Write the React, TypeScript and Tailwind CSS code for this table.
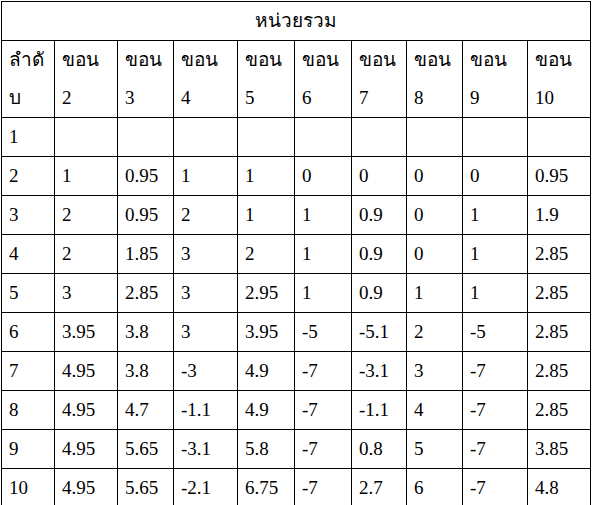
const widths = [53, 63, 56, 64, 57, 57, 55, 56, 65, 63];

const rows: string[][] = [
  ["1", "", "", "", "", "", "", "", "", ""],
  ["2", "1", "0.95", "1", "1", "0", "0", "0", "0", "0.95"],
  ["3", "2", "0.95", "2", "1", "1", "0.9", "0", "1", "1.9"],
  ["4", "2", "1.85", "3", "2", "1", "0.9", "0", "1", "2.85"],
  ["5", "3", "2.85", "3", "2.95", "1", "0.9", "1", "1", "2.85"],
  ["6", "3.95", "3.8", "3", "3.95", "-5", "-5.1", "2", "-5", "2.85"],
  ["7", "4.95", "3.8", "-3", "4.9", "-7", "-3.1", "3", "-7", "2.85"],
  ["8", "4.95", "4.7", "-1.1", "4.9", "-7", "-1.1", "4", "-7", "2.85"],
  ["9", "4.95", "5.65", "-3.1", "5.8", "-7", "0.8", "5", "-7", "3.85"],
  ["10", "4.95", "5.65", "-2.1", "6.75", "-7", "2.7", "6", "-7", "4.8"],
];

const rowHeights = [39, 38, 39, 38, 39, 39, 39, 38, 39, 39];

const cell =
  "border border-black px-[7px] py-0 align-middle [font-family:'Liberation_Serif','Times_New_Roman',Tinos,'Noto_Sans'] text-[19px] leading-[38px]";

export default function App() {
  return (
    <div className="w-[598px] h-[505px] overflow-hidden bg-white pl-[1px] pt-[1px] text-black">
      <table className="table-fixed border-collapse text-[19px] leading-[38px] text-black">
        <colgroup>
          {widths.map((w, i) => (
            <col key={i} style={{ width: w }} />
          ))}
        </colgroup>
        <tbody>
          <tr className="h-[38px]">
            <td colSpan={10} className={cell + " text-center"}>
              หน่วยรวม
            </td>
          </tr>
          <tr className="h-[77px]">
            <td className={cell}>
              ลำดั
              <br />บ
            </td>
            {[2, 3, 4, 5, 6, 7, 8, 9, 10].map((n) => (
              <td key={n} className={cell}>
                ขอน
                <br />
                {n}
              </td>
            ))}
          </tr>
          {rows.map((r, i) => (
            <tr key={i} style={{ height: rowHeights[i] }}>
              {r.map((c, j) => (
                <td key={j} className={cell + " whitespace-nowrap"}>
                  {c}
                </td>
              ))}
            </tr>
          ))}
        </tbody>
      </table>
    </div>
  );
}
